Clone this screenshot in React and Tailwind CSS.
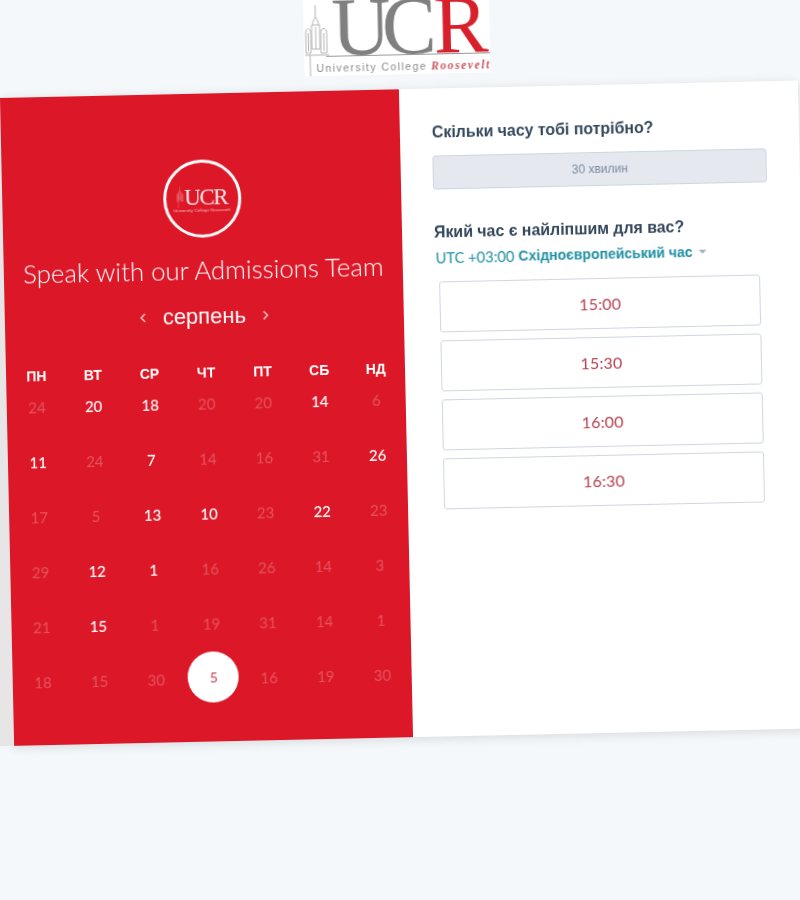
import React from "react";
import { ChevronLeft, ChevronRight } from "lucide-react";

const sans = "font-['Liberation_Sans',Arial,sans-serif]";
const lato = "font-['Lato','Noto_Sans',sans-serif]";

const weekdays = ["ПН", "ВТ", "СР", "ЧТ", "ПТ", "СБ", "НД"];

// on = clickable day, sel = selected day
const days = [
  { n: 24 }, { n: 20, on: true }, { n: 18, on: true }, { n: 20 }, { n: 20 }, { n: 14, on: true }, { n: 6 },
  { n: 11, on: true }, { n: 24 }, { n: 7, on: true }, { n: 14 }, { n: 16 }, { n: 31 }, { n: 26, on: true },
  { n: 17 }, { n: 5 }, { n: 13, on: true }, { n: 10, on: true }, { n: 23 }, { n: 22, on: true }, { n: 23 },
  { n: 29 }, { n: 12, on: true }, { n: 1, on: true }, { n: 16 }, { n: 26 }, { n: 14 }, { n: 3 },
  { n: 21 }, { n: 15, on: true }, { n: 1 }, { n: 19 }, { n: 31 }, { n: 14 }, { n: 1 },
  { n: 18 }, { n: 15 }, { n: 30 }, { n: 5, sel: true }, { n: 16 }, { n: 19 }, { n: 30 },
];

const slots = ["15:00", "15:30", "16:00", "16:30"];

const Tower = ({ className, stroke }) => (
  <svg viewBox="0 0 26 76" className={className} fill="none" stroke={stroke} strokeWidth="1" strokeLinejoin="round">
    <path d="M12 2V14M9 22C9 18 11 16 12 14 13 16 15 18 15 22M8 22H16V46H8Z" />
    <path d="M2 50V30C2 24 7 24 7 30V50ZM17 50V30C17 24 23 24 23 30V50ZM4.5 30V48M20 30V48M12 24V46" />
    <path d="M1 52H25M6 52V76" />
  </svg>
);

function Logo() {
  return (
    <div className="relative w-[186px] h-[83px] mr-[4px] bg-white overflow-hidden shrink-0">
      <Tower className="absolute left-0 top-[10px] w-[26px] h-[76px]" stroke="#b5b5b5" />
      <div className="absolute left-[28px] top-[-6px] flex items-baseline font-['Liberation_Serif',serif] text-[82px] leading-none tracking-[-9px]">
        <span className="text-[#808080]">UC</span>
        <span className="text-[#d8202c] ml-[6px] tracking-normal">R</span>
      </div>
      <div className="absolute left-[22px] right-0 top-[63px] h-px bg-[#9a9a9a]" />
      <div className="absolute left-[12px] top-[67px] flex items-baseline whitespace-nowrap">
        <span className={`${sans} text-[10.5px] tracking-[1.45px] text-[#8a8a8a]`}>University College</span>
        <span className="font-['Liberation_Serif',serif] italic font-bold text-[11.5px] tracking-[1.6px] text-[#c9545c] ml-[4px]">Roosevelt</span>
      </div>
    </div>
  );
}

function RoundLogo() {
  return (
    <div className="w-[78px] h-[78px] rounded-full border-[3px] border-white flex items-center justify-center">
      <div className="relative flex flex-col items-center text-white/90">
        <div className="flex items-center">
          <Tower className="w-[8px] h-[22px] opacity-70" stroke="#ffffff" />
          <span className="font-['Liberation_Serif',serif] text-[23px] leading-none tracking-[-1.5px]">UCR</span>
        </div>
        <span className={`${sans} text-[4px] leading-none tracking-[.2px] opacity-80 whitespace-nowrap`}>University College Roosevelt</span>
      </div>
    </div>
  );
}

function Calendar() {
  return (
    <div className="w-[399px] shrink-0 bg-[#dc1727] pt-[66px] flex flex-col items-center">
      <RoundLogo />
      <h1 className={`${lato} mt-[17px] text-[25.8px] leading-[30px] font-light text-white whitespace-nowrap`}>
        Speak with our Admissions Team
      </h1>
      <div className="mt-[17px] flex items-center h-[30px] text-white/70">
        <ChevronLeft size={14} strokeWidth={3} />
        <span className={`${sans} mx-[13px] text-[22px] text-white leading-none`}>серпень</span>
        <ChevronRight size={14} strokeWidth={3} />
      </div>
      <div className="mt-[34px] w-full pl-[2px] pr-[1px] grid grid-cols-7">
        {weekdays.map((d) => (
          <div key={d} className={`${sans} h-[14px] flex items-center justify-center text-[14px] font-bold text-white`}>{d}</div>
        ))}
      </div>
      <div className="-mt-[3px] w-full pl-[2px] pr-[1px] grid grid-cols-7 auto-rows-[55px]">
        {days.map((d, i) => (
          <div key={i} className="flex items-center justify-center">
            {d.sel ? (
              <div className={`${lato} w-[51px] h-[51px] -mt-[4px] ml-[2px] rounded-full bg-white flex items-center justify-center text-[14px] text-[#c9414f]`}>{d.n}</div>
            ) : (
              <span className={`${lato} text-[15px] ${d.on ? "text-white font-medium" : "text-white/25"}`}>{d.n}</span>
            )}
          </div>
        ))}
      </div>
    </div>
  );
}

function Booking() {
  return (
    <div className="flex-1 bg-white pl-[32px] pr-[33px] pt-[34px]">
      <h2 className={`${sans} text-[15.9px] leading-[20px] font-bold text-[#33475b]`}>Скільки часу тобі потрібно?</h2>
      <div className={`${sans} mt-[13px] h-[34px] flex items-center justify-center rounded-[3px] border border-[#cbd6e2] bg-[#e5e9ef] text-[12px] text-[#7c8a9e]`}>
        30 хвилин
      </div>
      <h2 className={`${sans} mt-[33px] text-[15.9px] leading-[20px] font-bold text-[#33475b]`}>Який час є найліпшим для вас?</h2>
      <div className="mt-[6px] pl-[1px] flex items-center h-[18px] text-[#1f8fa3]">
        <span className={`${lato} text-[14.7px]`}>UTC +03:00</span>
        <span className={`${sans} ml-[4px] text-[14px] font-bold`}>Східноєвропейський час</span>
        <span className="ml-[6px] w-0 h-0 border-x-[4px] border-x-transparent border-t-[4px] border-t-[#a3b3c4]" />
      </div>
      <div className="mt-[15px] ml-[4px] mr-[9px] flex flex-col gap-2">
        {slots.map((s) => (
          <div key={s} className={`${lato} h-[51px] flex items-center justify-center rounded-[3px] border border-[#cfd6e0] bg-white text-[16px] tracking-[.2px] text-[#b5404f]`}>
            {s}
          </div>
        ))}
      </div>
    </div>
  );
}

export default function App() {
  return (
    <div className="w-[800px] h-[900px] overflow-hidden bg-[#f5f8fa]">
      <div className="w-[800px] origin-[0px_98px] rotate-[-1.25deg] blur-[0.4px]">
        <div className="h-[98px] flex justify-center">
          <Logo />
        </div>
        <div className="w-[798px] h-[648px] flex shadow-[-20px_0_0_#e7e5e5,0_2px_10px_rgba(0,0,0,0.12)]">
          <Calendar />
          <Booking />
        </div>
      </div>
    </div>
  );
}
